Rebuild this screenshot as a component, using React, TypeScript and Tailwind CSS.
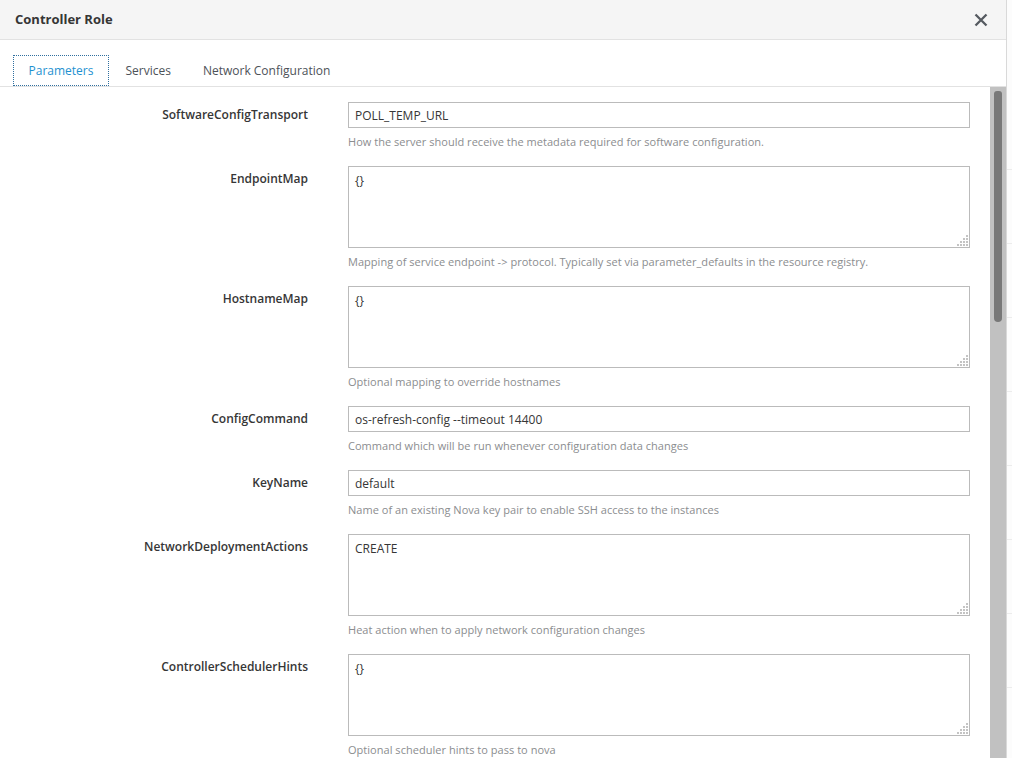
const params = [
  {
    label: "SoftwareConfigTransport",
    value: "POLL_TEMP_URL",
    help: "How the server should receive the metadata required for software configuration.",
    multi: false,
  },
  {
    label: "EndpointMap",
    value: "{}",
    help: "Mapping of service endpoint -> protocol. Typically set via parameter_defaults in the resource registry.",
    multi: true,
  },
  {
    label: "HostnameMap",
    value: "{}",
    help: "Optional mapping to override hostnames",
    multi: true,
  },
  {
    label: "ConfigCommand",
    value: "os-refresh-config --timeout 14400",
    help: "Command which will be run whenever configuration data changes",
    multi: false,
  },
  {
    label: "KeyName",
    value: "default",
    help: "Name of an existing Nova key pair to enable SSH access to the instances",
    multi: false,
  },
  {
    label: "NetworkDeploymentActions",
    value: "CREATE",
    help: "Heat action when to apply network configuration changes",
    multi: true,
  },
  {
    label: "ControllerSchedulerHints",
    value: "{}",
    help: "Optional scheduler hints to pass to nova",
    multi: true,
  },
  {
    label: "ControllerExtraConfig",
    value: "{}",
    help: "Role specific additional hiera configuration to inject into the cluster.",
    multi: true,
  },
];

const tabs = ["Parameters", "Services", "Network Configuration"];

// dotted resize grip in the textarea corner
const gripDots = [
  [9, 0],
  [9, 3],
  [6, 3],
  [9, 6],
  [6, 6],
  [3, 6],
  [9, 9],
  [6, 9],
  [3, 9],
  [0, 9],
];

export default function App() {
  return (
    <div
      className="flex h-[758px] w-[1012px] overflow-hidden bg-white text-[#363636]"
      style={{ fontFamily: '"Open Sans", "Liberation Sans", sans-serif' }}
    >
      {/* Modal */}
      <div className="flex w-[1007px] shrink-0 flex-col border-r border-[#d9d9d9]">
        {/* Header */}
        <div className="flex h-[40px] shrink-0 items-center justify-between border-b border-[#e2e2e2] bg-[#f5f5f5] pl-[15px] pr-[18px]">
          <h4 className="text-[13px] font-bold text-[#363636]">Controller Role</h4>
          <svg width="14" height="14" viewBox="0 0 14 14" fill="none">
            <path
              d="M1.5 1.5 L12.5 12.5 M12.5 1.5 L1.5 12.5"
              stroke="#555a60"
              strokeWidth="2.3"
            />
          </svg>
        </div>

        {/* Tabs */}
        <div className="flex h-[47px] shrink-0 items-end gap-[1px] border-b border-[#e2e2e2] pl-[13px]">
          {tabs.map((t, i) => (
            <div
              key={t}
              className={
                i === 0
                  ? "flex h-[31px] items-center border border-dotted border-[#2f6f9f] px-[14.5px] pt-[1px] text-[12px] text-[#1e91d0]"
                  : "flex h-[31px] items-center border border-transparent px-[14.5px] pt-[1px] text-[12px] text-[#4d5258]"
              }
            >
              {t}
            </div>
          ))}
        </div>

        {/* Body */}
        <div className="flex min-h-0 flex-1">
          <div className="min-w-0 flex-1 overflow-hidden pt-[15px]">
            {params.map((p) => (
              <div key={p.label} className="flex">
                <label className="w-[308px] shrink-0 pt-[4px] text-right text-[12px] leading-[18px] font-semibold text-[#363636]">
                  {p.label}
                </label>
                <div className="ml-[40px] w-[622px] shrink-0">
                  {p.multi ? (
                    <div className="relative">
                      <textarea
                        readOnly
                        defaultValue={p.value}
                        className="block h-[82px] w-full resize-none border border-[#bbbbbb] px-[6px] py-[6px] text-[12px] leading-[16px] text-[#363636] outline-none"
                      />
                      <svg
                        width="11"
                        height="11"
                        viewBox="0 0 11 11"
                        className="absolute right-[2px] bottom-[2px]"
                      >
                        {gripDots.map(([x, y], k) => (
                          <rect key={k} x={x} y={y} width="2" height="2" fill="#c4c4c4" />
                        ))}
                      </svg>
                    </div>
                  ) : (
                    <input
                      readOnly
                      defaultValue={p.value}
                      className="block h-[26px] w-full border border-[#bbbbbb] px-[6px] text-[12px] text-[#363636] outline-none"
                    />
                  )}
                  <p className="mt-[5px] mb-[15px] text-[11px] leading-[18px] tracking-[0.03px] text-[#8b8d8f]">
                    {p.help}
                  </p>
                </div>
              </div>
            ))}
          </div>

          {/* Scrollbar */}
          <div className="w-[16px] shrink-0 bg-[#c1c1c1] pt-[4px]">
            <div className="mx-auto h-[231px] w-[8px] rounded-b-[4px] rounded-t-[3px] bg-[#787878]" />
          </div>
        </div>
      </div>

      {/* Page behind the modal */}
      <div className="flex flex-1 flex-col bg-[#fcfcfc] pt-[96px]">
        {[0, 1, 2, 3, 4, 5, 6, 7, 8].map((n) => (
          <div key={n} className="h-[74px] shrink-0 border-b border-[#ececec]" />
        ))}
      </div>
    </div>
  );
}
